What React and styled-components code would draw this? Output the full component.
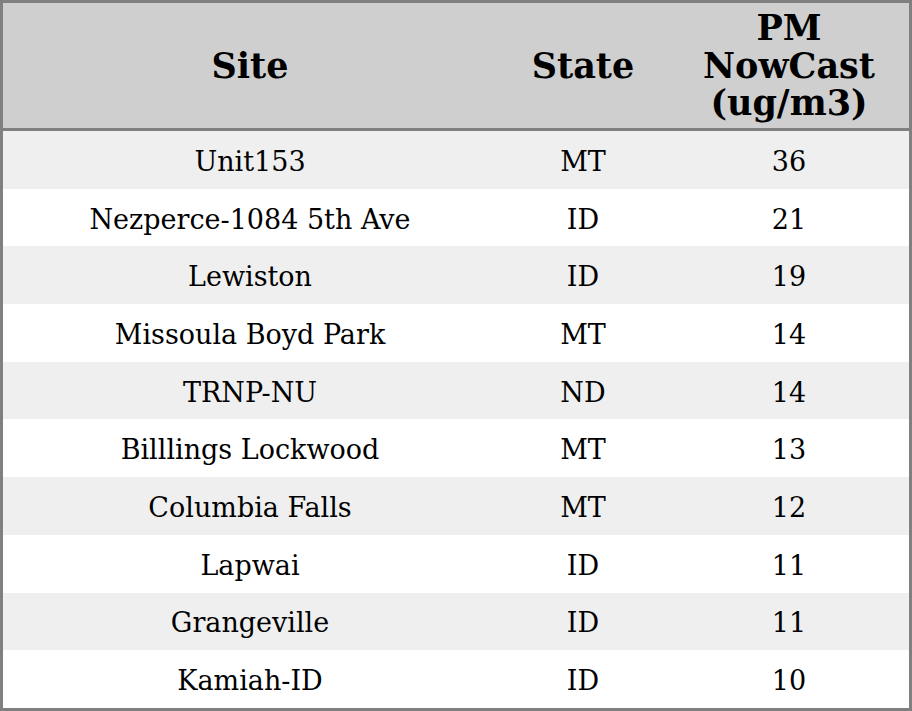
import React from "react";
import styled, {createGlobalStyle} from "styled-components";

const GlobalStyle = createGlobalStyle`
  html, body {
    margin: 0;
    padding: 0;
    background: #ffffff;
  }
`;

const Table = styled.table`
  width: 912px;
  table-layout: fixed;
  border-collapse: separate;
  border-spacing: 0;
  border: 3px solid #808080;
  font-family: "DejaVu Serif", "Liberation Serif", serif;
  color: #000000;
`;

const HeadCell = styled.th`
  background-color: #cfcfcf;
  height: 125px;
  padding: 0 4px;
  font-size: 35px;
  font-weight: bold;
  line-height: 37.5px;
  text-align: center;
  vertical-align: middle;
  border-bottom: 3px solid #808080;
`;

const Row = styled.tr`
  background-color: ${props => props.shade ? "#efefef" : "#ffffff"};
`;

const Cell = styled.td`
  height: 57.7px;
  padding: 4px 0 0;
  font-size: 27px;
  line-height: 30px;
  text-align: center;
  vertical-align: middle;
  box-sizing: border-box;
`;

const rows = [
    ["Unit153", "MT", 36],
    ["Nezperce-1084 5th Ave", "ID", 21],
    ["Lewiston", "ID", 19],
    ["Missoula Boyd Park", "MT", 14],
    ["TRNP-NU", "ND", 14],
    ["Billlings Lockwood", "MT", 13],
    ["Columbia Falls", "MT", 12],
    ["Lapwai", "ID", 11],
    ["Grangeville", "ID", 11],
    ["Kamiah-ID", "ID", 10],
];

export default function App() {
    return (
        <>
            <GlobalStyle/>
            <Table>
                <colgroup>
                    <col style={{width: 494}}/>
                    <col style={{width: 172}}/>
                    <col style={{width: 240}}/>
                </colgroup>
                <thead>
                <tr>
                    <HeadCell>Site</HeadCell>
                    <HeadCell>State</HeadCell>
                    <HeadCell>PM<br/>NowCast<br/>(ug/m3)</HeadCell>
                </tr>
                </thead>
                <tbody>
                {rows.map((r, i) => (
                    <Row key={i} shade={i % 2 === 0}>
                        <Cell>{r[0]}</Cell>
                        <Cell>{r[1]}</Cell>
                        <Cell>{r[2]}</Cell>
                    </Row>
                ))}
                </tbody>
            </Table>
        </>
    )
}
